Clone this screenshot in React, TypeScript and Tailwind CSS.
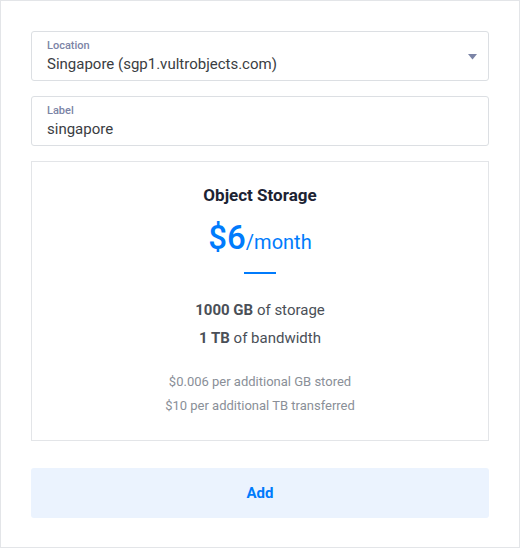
export default function App() {
  return (
    <div className="w-[520px] h-[548px] border border-[#e3e5e8] bg-white px-[30px] pt-[30px] font-['Roboto',sans-serif]">
      <div className="flex flex-col gap-[15px]">
        <div className="h-[50px] rounded-[3px] border border-[#dcdfe3] px-[15px] pt-[7px] flex items-start justify-between">
          <div className="flex flex-col">
            <span className="text-[11px] leading-[14px] font-medium text-[#7b84a6]">Location</span>
            <span className="text-[15px] leading-[22px] text-[#3a3d42]">Singapore (sgp1.vultrobjects.com)</span>
          </div>
          <svg width="9" height="6" viewBox="0 0 9 6" className="mt-[15px] mr-[-4px]">
            <path d="M0 0 H9 L4.5 5.5 Z" fill="#7b84a6" />
          </svg>
        </div>
        <div className="h-[50px] rounded-[3px] border border-[#dcdfe3] px-[15px] pt-[7px] flex flex-col">
          <span className="text-[11px] leading-[14px] font-medium text-[#7b84a6]">Label</span>
          <span className="text-[15px] leading-[22px] text-[#3a3d42]">singapore</span>
        </div>
        <div className="h-[280px] border border-[#e3e5e8] flex flex-col items-center pt-[22px]">
          <h2 className="text-[17px] leading-[22px] font-bold text-[#1c2333]">Object Storage</h2>
          <div className="mt-[14px] flex items-baseline text-[#007bfc]">
            <span className="text-[33px] leading-[36px] font-medium">$6</span>
            <span className="text-[20px] leading-[24px]">/month</span>
          </div>
          <div className="mt-[16px] h-[2px] w-[32px] bg-[#007bfc]" />
          <p className="mt-[26px] text-[15px] leading-[20px] text-[#4a4f57]">
            <b className="font-bold">1000 GB</b> of storage
          </p>
          <p className="mt-[8px] text-[15px] leading-[20px] text-[#4a4f57]">
            <b className="font-bold">1 TB</b> of bandwidth
          </p>
          <p className="mt-[26px] text-[13px] leading-[16px] text-[#8a8f98]">$0.006 per additional GB stored</p>
          <p className="mt-[8px] text-[13px] leading-[16px] text-[#8a8f98]">$10 per additional TB transferred</p>
        </div>
        <button className="mt-[12px] h-[50px] rounded-[3px] bg-[#ebf3fe] text-[15px] font-bold text-[#007bfc]">
          Add
        </button>
      </div>
    </div>
  );
}
